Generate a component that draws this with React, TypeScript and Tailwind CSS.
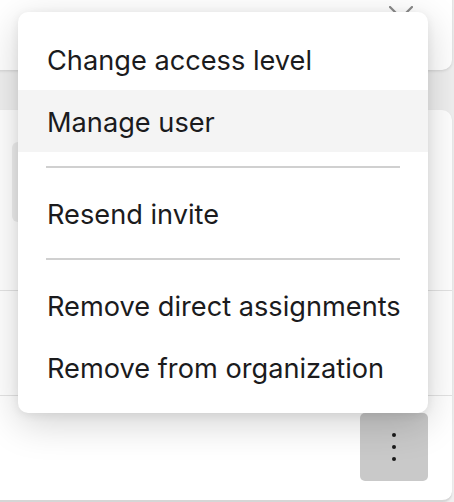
const groups = [
    ["Change access level", "Manage user"],
    ["Resend invite"],
    ["Remove direct assignments", "Remove from organization"],
];

function MenuItem({ label, active }: { label: string; active?: boolean }) {
    return (
        <div
            className={`h-[62px] flex items-center pl-[29px] pt-[4px] whitespace-nowrap text-[27.2px] text-[#1b1b1d] ${
                active ? "bg-[#f4f4f4]" : ""
            }`}
        >
            {label}
        </div>
    );
}

export default function App() {
    return (
        <div
            className="relative w-[454px] h-[502px] overflow-hidden bg-[#efefef]"
            style={{ fontFamily: "Inter, 'Noto Sans', sans-serif" }}
        >
            {/* card above */}
            <div className="-mt-[12px] -ml-[12px] mr-[2px] h-[82px] bg-white rounded-br-[10px] shadow-[0_1px_3px_rgba(0,0,0,0.12)] flex justify-end items-start pt-[18px] pr-[39px]">
                <svg width="24" height="24" viewBox="0 0 24 24" className="text-[#8a8a8a]">
                    <path d="M1 1L23 23M23 1L1 23" stroke="currentColor" strokeWidth="2.2" strokeLinecap="round" />
                </svg>
            </div>

            {/* members card */}
            <div className="mt-[40px] -ml-[12px] mr-[2px] h-[392px] bg-white rounded-r-[10px] shadow-[0_1px_2px_rgba(0,0,0,0.1)] border-b-2 border-[#d6d6d6] flex flex-col">
                <div className="h-[181px] pt-[32px] pl-[24px] border-b border-[#e3e3e3]">
                    <div className="w-[120px] h-[80px] rounded-[6px] bg-[#eeeeee]" />
                </div>
                <div className="h-[105px] border-b border-[#e3e3e3]" />
                <div className="flex-1 flex justify-end pt-[17px] pr-[24px]">
                    <button className="w-[68px] h-[68px] rounded-[5px] bg-[#c9c9c9] flex flex-col items-center justify-center gap-[8px]">
                        <span className="w-[4px] h-[4px] rounded-full bg-[#1a1a1a]" />
                        <span className="w-[4px] h-[4px] rounded-full bg-[#1a1a1a]" />
                        <span className="w-[4px] h-[4px] rounded-full bg-[#1a1a1a]" />
                    </button>
                </div>
            </div>

            {/* dropdown menu */}
            <div className="absolute left-[18px] top-[12px] w-[410px] bg-white rounded-[10px] pt-[16px] pb-[15px] shadow-[0_10px_38px_rgba(0,0,0,0.18),0_2px_10px_rgba(0,0,0,0.07)]">
                {groups.map((group, gi) => (
                    <div key={gi}>
                        {gi > 0 && <div className="mx-[28px] my-[14px] h-[2px] bg-[#d0d0d0]" />}
                        {group.map((label) => (
                            <MenuItem key={label} label={label} active={label === "Manage user"} />
                        ))}
                    </div>
                ))}
            </div>
        </div>
    );
}
